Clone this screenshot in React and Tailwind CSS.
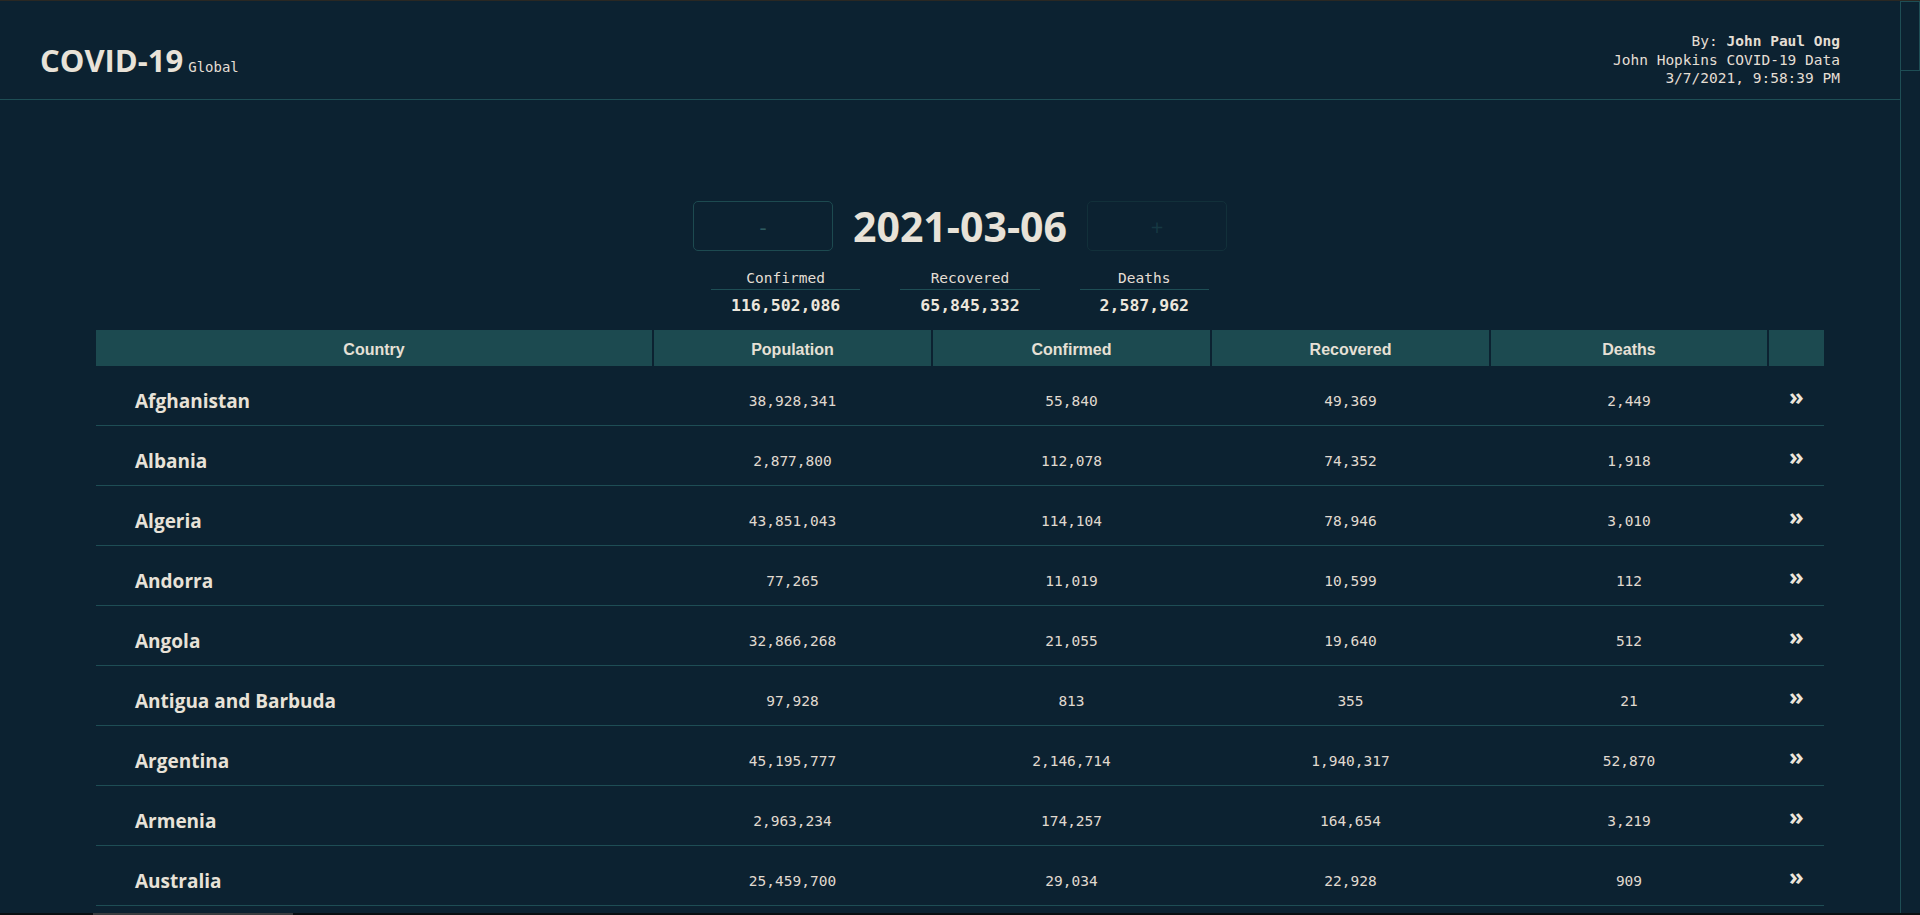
import React from 'react';

const rows = [
  ['Afghanistan', '38,928,341', '55,840', '49,369', '2,449'],
  ['Albania', '2,877,800', '112,078', '74,352', '1,918'],
  ['Algeria', '43,851,043', '114,104', '78,946', '3,010'],
  ['Andorra', '77,265', '11,019', '10,599', '112'],
  ['Angola', '32,866,268', '21,055', '19,640', '512'],
  ['Antigua and Barbuda', '97,928', '813', '355', '21'],
  ['Argentina', '45,195,777', '2,146,714', '1,940,317', '52,870'],
  ['Armenia', '2,963,234', '174,257', '164,654', '3,219'],
  ['Australia', '25,459,700', '29,034', '22,928', '909'],
];

const mono = "font-['DejaVu_Sans_Mono','Liberation_Mono',monospace]";
const sans = "font-['Open_Sans','Noto_Sans',sans-serif]";
const cols = 'grid grid-cols-[556px_277px_277px_277px_276px_55px] gap-x-[2px]';

function Stat({ label, value }) {
  return (
    <div className="flex flex-col items-center">
      <div className={`${mono} text-[14.5px] leading-[20px] pb-[1px] px-5 w-full text-center border-b border-[#1e4e55] text-[#e4ded4]`}>{label}</div>
      <div className={`${mono} text-[16.5px] leading-[22px] mt-[5px] px-5 font-bold text-[#ece6dc]`}>{value}</div>
    </div>
  );
}

export default function App() {
  return (
    <div className="relative h-[915px] w-full overflow-hidden bg-[#0c2231] text-[#e6e0d6]">
      <div className="h-[1px] bg-[#2a2823]" />

      {/* header */}
      <header className="h-[99px] pt-5 flex items-center justify-between pl-10 pr-[80px] border-b border-[#1e4e55]">
        <div className="flex items-baseline gap-[5px]">
          <span className={`${sans} text-[31px] font-bold text-[#e8e2d8]`}>COVID-19</span>
          <span className={`${mono} text-[14px] text-[#e4ded4]`}>Global</span>
        </div>
        <div className={`${mono} text-[14.5px] leading-[18.5px] text-right text-[#e4ded4]`}>
          <div>By: <span className="font-bold">John Paul Ong</span></div>
          <div>John Hopkins COVID-19 Data</div>
          <div>3/7/2021, 9:58:39 PM</div>
        </div>
      </header>

      {/* date picker */}
      <div className="mt-[101px] flex items-center justify-center gap-5">
        <button className={`${sans} w-[140px] h-[50px] rounded-[5px] border border-[#1d4a50] text-[22px] text-[#2d5a60]`}>-</button>
        <div className={`${sans} text-[41px] font-bold leading-[50px] text-[#e8e2d8]`}>2021-03-06</div>
        <button className={`${sans} w-[140px] h-[50px] rounded-[5px] border border-[#12303a] text-[22px] text-[#163843]`}>+</button>
      </div>

      {/* totals */}
      <div className="mt-[17px] flex justify-center gap-10">
        <Stat label="Confirmed" value="116,502,086" />
        <Stat label="Recovered" value="65,845,332" />
        <Stat label="Deaths" value="2,587,962" />
      </div>

      {/* table */}
      <div className="mt-[13px] w-[1728px] mx-auto">
        <div className={`${cols} h-[36px] font-['Liberation_Sans',Arial,sans-serif] text-[16px] font-bold text-[#e6e0d6]`}>
          {['Country', 'Population', 'Confirmed', 'Recovered', 'Deaths', ''].map((h, i) => (
            <div key={i} className="bg-[#1c4a50] pt-1 flex items-center justify-center">{h}</div>
          ))}
        </div>
        {rows.map((r) => (
          <div key={r[0]} className={`${cols} h-[60px] pt-[12px] border-b border-[#1e4e55] items-center`}>
            <div className={`${sans} pl-[39px] text-[19px] font-bold text-[#e8e2d8]`}>{r[0]}</div>
            {r.slice(1).map((v, i) => (
              <div key={i} className={`${mono} text-[14.5px] text-center text-[#e0dad0]`}>{v}</div>
            ))}
            <div className={`${sans} text-center text-[24px] font-bold leading-none mb-[12px] text-[#ece6dc]`}>»</div>
          </div>
        ))}
      </div>

      {/* scrollbars */}
      <div className="absolute top-[1px] bottom-0 right-0 w-5 bg-[#0c2231] border-l border-[#1e4e55]">
        <div className="h-[70px] border border-l-0 border-[#1e4e55]" />
      </div>
      <div className="absolute left-0 right-0 bottom-0 h-[2px] bg-[#0a0f12]">
        <div className="ml-[93px] w-[200px] h-full bg-[#3a3d3f]" />
      </div>
    </div>
  );
}
